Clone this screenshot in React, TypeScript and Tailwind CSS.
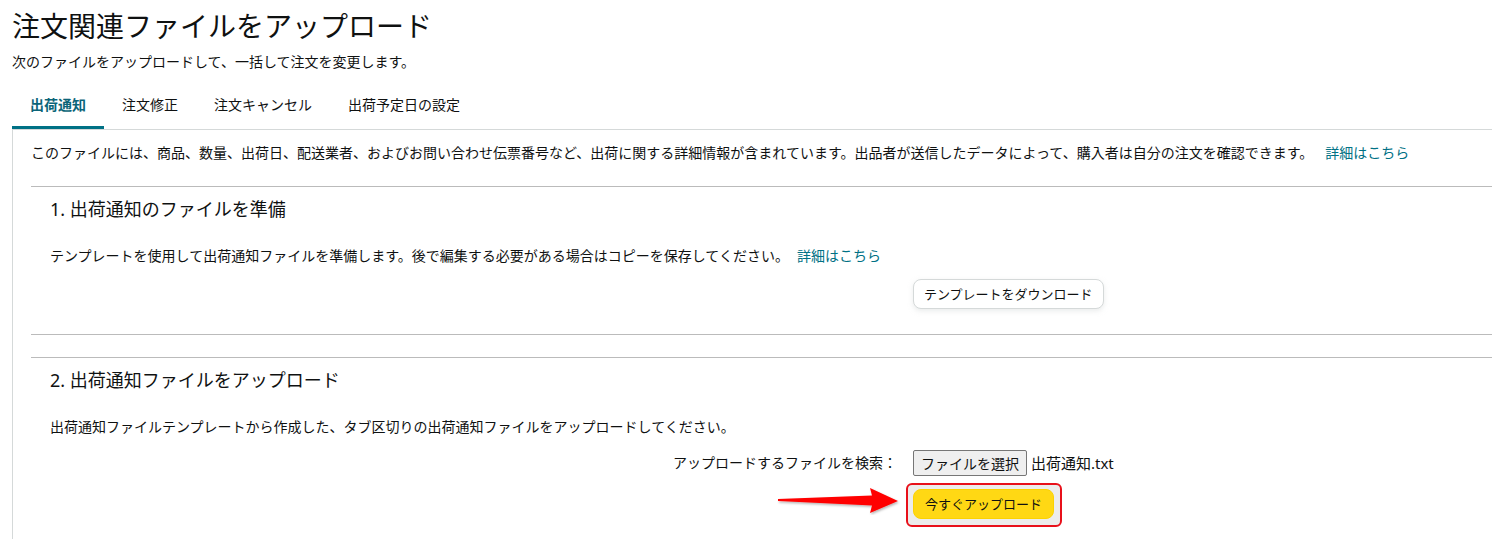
import React from "react";

const font = { fontFamily: '"Noto Sans", "Noto Sans CJK JP", sans-serif' };

export default function App() {
  return (
    <div className="min-h-[539px] w-full overflow-hidden bg-white text-[#0f1111]" style={font}>
      <div className="pl-3">
        <h1 className="pt-2 text-[28px] leading-[36px] font-normal">注文関連ファイルをアップロード</h1>
        <p className="mt-2 text-[14px] leading-5">次のファイルをアップロードして、一括して注文を変更します。</p>

        <div className="mt-3 flex text-[14px] leading-5">
          <div className="px-[18px] pt-[11px] pb-[11px] border-b-[3px] border-[#007185] font-bold text-[#0b6478]">出荷通知</div>
          <div className="px-[18px] pt-[11px] pb-[14px]">注文修正</div>
          <div className="px-[18px] pt-[11px] pb-[14px]">注文キャンセル</div>
          <div className="px-[18px] pt-[11px] pb-[14px]">出荷予定日の設定</div>
        </div>

        <div className="border-l border-t border-[#d5d9d9] pl-[18px] pt-[13px] pb-10">
          <p className="text-[14px] leading-5 whitespace-nowrap">
            このファイルには、商品、数量、出荷日、配送業者、およびお問い合わせ伝票番号など、出荷に関する詳細情報が含まれています。出品者が送信したデータによって、購入者は自分の注文を確認できます。
            <span className="ml-[12px] text-[#007185]">詳細はこちら</span>
          </p>

          <div className="mt-[23px] border-t border-[#bbbbbb]" />
          <section className="pl-[19px]">
            <h2 className="mt-[10px] text-[18px] leading-6 font-normal">1. 出荷通知のファイルを準備</h2>
            <p className="mt-[25px] text-[14px] leading-5">
              テンプレートを使用して出荷通知ファイルを準備します。後で編集する必要がある場合はコピーを保存してください。
              <span className="ml-[8px] text-[#007185]">詳細はこちら</span>
            </p>
            <div className="mt-[13px] grid grid-cols-[847px_auto] gap-x-4">
              <div />
              <div>
                <button className="h-[30px] px-[10px] rounded-lg border border-[#d5d9d9] bg-white text-[13px] leading-5 shadow-[0_2px_5px_rgba(213,217,217,0.5)]">
                  テンプレートをダウンロード
                </button>
              </div>
            </div>
          </section>
          <div className="mt-[25px] border-t border-[#bbbbbb]" />
          <div className="mt-[22px] border-t border-[#bbbbbb]" />

          <section className="pl-[19px]">
            <h2 className="mt-[10px] text-[18px] leading-6 font-normal">2. 出荷通知ファイルをアップロード</h2>
            <p className="mt-[25px] text-[14px] leading-5">
              出荷通知ファイルテンプレートから作成した、タブ区切りの出荷通知ファイルをアップロードしてください。
            </p>
            <div className="mt-[13px] grid grid-cols-[847px_auto] gap-x-4 gap-y-[13px] items-center">
              <div className="text-right text-[14px] leading-5">アップロードするファイルを検索：</div>
              <div className="flex items-center gap-[4px]">
                <span className="h-[26px] px-[7px] flex items-center rounded-[2px] border border-[#767676] bg-[#efefef] text-[14px]">ファイルを選択</span>
                <span className="text-[15px]">出荷通知.txt</span>
              </div>
              <div className="relative h-[30px]">
                <svg className="absolute right-[-5px] top-[-4px]" width="126" height="30" viewBox="0 0 126 30">
                  <defs>
                    <filter id="sh" x="-10%" y="-30%" width="120%" height="160%">
                      <feDropShadow dx="1" dy="1.5" stdDeviation="1" floodColor="#000" floodOpacity="0.3" />
                    </filter>
                  </defs>
                  <polygon
                    points="2,14 96,10.5 94,3 122,16 94,28 96,20.5 2,16"
                    fill="#ff0000"
                    filter="url(#sh)"
                  />
                </svg>
              </div>
              <div>
                <div className="relative inline-block">
                  <div className="absolute -left-[7px] -top-[6px] -right-[8px] -bottom-[8px] rounded-md border-2 border-[#e8101a] bg-[#ececec]" />
                  <button className="relative h-[30px] px-[11px] rounded-lg border border-[#fcd200] bg-[#ffd814] text-[13px] leading-5">
                    今すぐアップロード
                  </button>
                </div>
              </div>
            </div>
          </section>
        </div>
      </div>
    </div>
  );
}
